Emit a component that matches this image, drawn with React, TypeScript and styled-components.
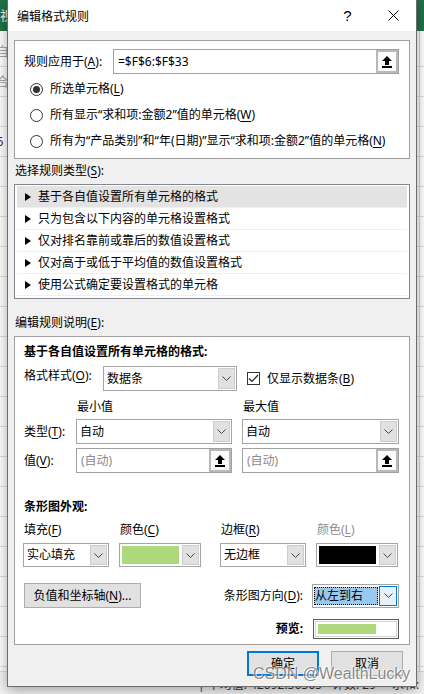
import styled, { createGlobalStyle } from "styled-components";

const GlobalStyle = createGlobalStyle`
  html, body {
    margin: 0;
    padding: 0;
  }
  body {
    font-family: "Noto Sans", "Noto Sans CJK SC", sans-serif;
    font-size: 12px;
    color: #000;
  }
`;

const green = "#add87c";

function Chevron() {
  return (
    <svg width="9" height="5" viewBox="0 0 9 5">
      <polyline points="0.5,0.5 4.5,4.5 8.5,0.5" fill="none" stroke="#444" strokeWidth="1" />
    </svg>
  );
}

function RefIcon() {
  return (
    <svg width="10" height="12" viewBox="0 0 10 12">
      <polygon points="5,0 10,5 7,5 7,9 3,9 3,5 0,5" fill="#000" />
      <rect x="0" y="10" width="10" height="2" fill="#000" />
    </svg>
  );
}

function Triangle() {
  return (
    <svg width="6" height="8" viewBox="0 0 6 8">
      <polygon points="0,0 6,4 0,8" fill="#000" />
    </svg>
  );
}

type SelectProps = {
  width: number
  height?: number
  text?: string
  swatch?: string
}

function Select(props: SelectProps) {
  return (
    <SelectBox $w={props.width} $h={props.height ?? 25}>
      {props.swatch ? <Swatch $color={props.swatch} /> : <SelectText>{props.text}</SelectText>}
      <DropButton>
        <Chevron />
      </DropButton>
    </SelectBox>
  );
}

function RefInput(props: { text: string; muted?: boolean; width?: number }) {
  return (
    <InputBox $w={props.width}>
      <InputText $muted={props.muted}>{props.text}</InputText>
      <RefButton>
        <RefIcon />
      </RefButton>
    </InputBox>
  );
}

const rules = [
  "基于各自值设置所有单元格的格式",
  "只为包含以下内容的单元格设置格式",
  "仅对排名靠前或靠后的数值设置格式",
  "仅对高于或低于平均值的数值设置格式",
  "使用公式确定要设置格式的单元格",
];

export default function App() {
  return (
    <>
      <GlobalStyle />
      <Screen>
        <Excel>
          <Ribbon>视图</Ribbon>
          <Sheet>
            <SheetRow $muted>自</SheetRow>
            <SheetRow $muted>合</SheetRow>
            <SheetRow />
            <SheetRow>6</SheetRow>
            {Array.from({ length: 22 }).map((_, i) => (
              <SheetRow key={i} />
            ))}
          </Sheet>
          <StatusBar>
            <StatusItem $left={198}>| 平均值: 42092.36365</StatusItem>
            <StatusItem $left={332}>计数: 29</StatusItem>
            <StatusItem $left={392}>求和:</StatusItem>
          </StatusBar>
        </Excel>

        <Dialog>
          <TitleBar>
            <Title>编辑格式规则</Title>
            <HelpButton>?</HelpButton>
            <CloseButton>
              <svg width="11" height="11" viewBox="0 0 11 11">
                <line x1="0.5" y1="0.5" x2="10.5" y2="10.5" stroke="#000" strokeWidth="1" />
                <line x1="10.5" y1="0.5" x2="0.5" y2="10.5" stroke="#000" strokeWidth="1" />
              </svg>
            </CloseButton>
          </TitleBar>

          <Body>
            <Panel $pad="8px 10px 4px 9px">
              <ApplyRow>
                <ApplyLabel>规则应用于(<Key>A</Key>):</ApplyLabel>
                <RefInput text="=$F$6:$F$33" />
              </ApplyRow>
              <RadioRow>
                <Radio $checked />
                <span>所选单元格(<Key>L</Key>)</span>
              </RadioRow>
              <RadioRow>
                <Radio />
                <span>所有显示“求和项:金额2”值的单元格(<Key>W</Key>)</span>
              </RadioRow>
              <RadioRow>
                <Radio />
                <span>所有为“产品类别”和“年(日期)”显示“求和项:金额2”值的单元格(<Key>N</Key>)</span>
              </RadioRow>
            </Panel>

            <SectionLabel $top={4}>选择规则类型(<Key>S</Key>):</SectionLabel>
            <RuleList>
              {rules.map((r, i) => (
                <RuleItem key={r} $selected={i === 0}>
                  <Triangle />
                  {r}
                </RuleItem>
              ))}
            </RuleList>

            <SectionLabel $top={16}>编辑规则说明(<Key>E</Key>):</SectionLabel>
            <Panel $pad="7px 10px 5px 9px">
              <Heading>基于各自值设置所有单元格的格式:</Heading>
              <FormatRow>
                <FormatLabel>格式样式(<Key>O</Key>):</FormatLabel>
                <Select width={134} text="数据条" />
                <CheckWrap>
                  <CheckBox>
                    <svg width="11" height="9" viewBox="0 0 11 9">
                      <polyline points="1,4.5 4,7.5 10,1" fill="none" stroke="#222" strokeWidth="1.2" />
                    </svg>
                  </CheckBox>
                  <span>仅显示数据条(<Key>B</Key>)</span>
                </CheckWrap>
              </FormatRow>

              <RangeGrid>
                <span />
                <ColHead>最小值</ColHead>
                <ColHead>最大值</ColHead>
                <RowLabel>类型(<Key>T</Key>):</RowLabel>
                <Select width={156} text="自动" />
                <Select width={157} text="自动" />
                <RowLabel>值(<Key>V</Key>):</RowLabel>
                <RefInput text="(自动)" muted width={156} />
                <RefInput text="(自动)" muted width={157} />
              </RangeGrid>

              <Heading $top={26}>条形图外观:</Heading>
              <LookGrid>
                <LookLabel>填充(<Key>F</Key>)</LookLabel>
                <LookLabel>颜色(<Key>C</Key>)</LookLabel>
                <LookLabel>边框(<Key>R</Key>)</LookLabel>
                <LookLabel $disabled>颜色(<Key>L</Key>)</LookLabel>
                <Select width={86} height={24} text="实心填充" />
                <Select width={82} height={24} swatch={green} />
                <Select width={86} height={24} text="无边框" />
                <Select width={82} height={24} swatch="#000" />
              </LookGrid>

              <ActionRow>
                <PushButton $w={117}>负值和坐标轴(<Key>N</Key>)...</PushButton>
                <Spacer />
                <span>条形图方向(<Key>D</Key>):</span>
                <DirSelect>
                  <DirValue>从左到右</DirValue>
                  <DirDrop>
                    <Chevron />
                  </DirDrop>
                </DirSelect>
              </ActionRow>

              <PreviewRow>
                <Bold>预览:</Bold>
                <PreviewBox>
                  <PreviewInner>
                    <PreviewBar />
                  </PreviewInner>
                </PreviewBox>
              </PreviewRow>
            </Panel>

            <ButtonRow>
              <PushButton $w={72} $h={25} $default>确定</PushButton>
              <PushButton $w={72} $h={25}>取消</PushButton>
            </ButtonRow>
          </Body>
        </Dialog>

        <Watermark>CSDN @WealthLucky</Watermark>
      </Screen>
    </>
  );
}

const Screen = styled.div`
  position: relative;
  width: 424px;
  height: 694px;
  overflow: hidden;
  background: #fff;
`;

const Excel = styled.div`
  display: flex;
  flex-direction: column;
  height: 100%;
`;

const Ribbon = styled.div`
  height: 31px;
  flex: none;
  background: #217346;
  color: #fff;
  font-size: 13px;
  padding-top: 6px;
  box-sizing: border-box;
  line-height: 18px;
`;

const Sheet = styled.div`
  flex: 1;
  overflow: hidden;
  background: #fff;
  background-image: linear-gradient(90deg, transparent 419px, #d4d4d4 419px, #d4d4d4 420px, transparent 420px);
  padding-top: 6px;
`;

const SheetRow = styled.div<{ $muted?: boolean }>`
  height: 29px;
  border-bottom: 1px solid #dedede;
  line-height: 29px;
  font-size: 13px;
  color: ${(p) => (p.$muted ? "#a6a6a6" : "#333")};
  margin-left: -4px;
`;

const StatusBar = styled.div`
  position: relative;
  height: 22px;
  flex: none;
  background: #f3f3f3;
  border-top: 1px solid #dadada;
  color: #333;
`;

const StatusItem = styled.span<{ $left: number }>`
  position: absolute;
  left: ${(p) => p.$left}px;
  top: 3px;
  white-space: nowrap;
`;

const Dialog = styled.div`
  position: absolute;
  left: 7px;
  top: 0;
  width: 410px;
  height: 687px;
  box-sizing: border-box;
  border: 1px solid #6e6e6e;
  border-top: none;
  background: #f0f0f0;
  box-shadow: 0 3px 12px rgba(0, 0, 0, 0.35);
  display: flex;
  flex-direction: column;
`;

const TitleBar = styled.div`
  height: 31px;
  flex: none;
  background: #fff;
  display: flex;
  align-items: center;
  padding-left: 9px;
`;

const Title = styled.div`
  flex: 1;
  font-size: 12px;
`;

const HelpButton = styled.div`
  width: 45px;
  text-align: center;
  font-size: 15px;
  font-family: "Liberation Sans", sans-serif;
`;

const CloseButton = styled.div`
  width: 46px;
  height: 31px;
  display: flex;
  align-items: center;
  justify-content: center;
`;

const Body = styled.div`
  flex: 1;
  display: flex;
  flex-direction: column;
  padding: 9px 6px 10px;
  line-height: 16px;
`;

const Panel = styled.div<{ $pad: string }>`
  background: #fff;
  border: 1px solid #a0a0a0;
  padding: ${(p) => p.$pad};
  display: flex;
  flex-direction: column;
`;

const Key = styled.u`
  text-decoration: underline;
  text-underline-offset: 2px;
`;

const ApplyRow = styled.div`
  display: flex;
  align-items: center;
  margin-bottom: 2px;
`;

const ApplyLabel = styled.div`
  width: 89px;
  flex: none;
`;

const InputBox = styled.div<{ $w?: number }>`
  flex: ${(p) => (p.$w ? "none" : "1")};
  width: ${(p) => (p.$w ? `${p.$w}px` : "auto")};
  height: 25px;
  box-sizing: border-box;
  border: 1px solid #a0a0a0;
  background: #fff;
  display: flex;
  align-items: center;
  padding-left: 4px;
`;

const InputText = styled.span<{ $muted?: boolean }>`
  flex: 1;
  color: ${(p) => (p.$muted ? "#8a8a8a" : "#000")};
`;

const RefButton = styled.div`
  width: 22px;
  align-self: stretch;
  box-sizing: border-box;
  border: 2px solid #b9b9b9;
  background: #fbfbfb;
  display: flex;
  align-items: center;
  justify-content: center;
`;

const RadioRow = styled.div`
  height: 26px;
  display: flex;
  align-items: center;
  gap: 7px;
  padding-left: 6px;
  white-space: nowrap;
`;

const Radio = styled.span<{ $checked?: boolean }>`
  width: 13px;
  height: 13px;
  box-sizing: border-box;
  border: 1px solid #333;
  border-radius: 50%;
  display: flex;
  align-items: center;
  justify-content: center;

  &::after {
    content: "";
    width: 7px;
    height: 7px;
    border-radius: 50%;
    background: ${(p) => (p.$checked ? "#333" : "transparent")};
  }
`;

const SectionLabel = styled.div<{ $top: number }>`
  margin: ${(p) => p.$top}px 0 5px 1px;
`;

const RuleList = styled.div`
  background: #fff;
  border: 1px solid #828790;
  padding: 1px 2px 2px;
`;

const RuleItem = styled.div<{ $selected?: boolean }>`
  height: 21px;
  border-bottom: 1px solid #f0f0f0;
  background: ${(p) => (p.$selected ? "#e3e3e3" : "transparent")};
  display: flex;
  align-items: center;
  gap: 7px;
  padding-left: 8px;
`;

const Heading = styled.div<{ $top?: number }>`
  font-weight: 700;
  margin-top: ${(p) => p.$top ?? 0}px;
`;

const Bold = styled.span`
  font-weight: 700;
`;

const FormatRow = styled.div`
  display: flex;
  align-items: flex-start;
  margin-top: 6px;
`;

const FormatLabel = styled.div`
  width: 79px;
  flex: none;
  padding-top: 2px;
`;

const SelectBox = styled.div<{ $w: number; $h: number }>`
  width: ${(p) => p.$w}px;
  height: ${(p) => p.$h}px;
  box-sizing: border-box;
  border: 1px solid #a5a5a5;
  background: #fff;
  display: flex;
  align-items: stretch;
`;

const SelectText = styled.span`
  flex: 1;
  display: flex;
  align-items: center;
  padding-left: 3px;
  white-space: nowrap;
`;

const Swatch = styled.span<{ $color: string }>`
  flex: 1;
  margin: 2px;
  background: ${(p) => p.$color};
`;

const DropButton = styled.span`
  width: 17px;
  margin: 1px;
  box-sizing: border-box;
  background: #e1e1e1;
  border: 1px solid #cdcdcd;
  display: flex;
  align-items: center;
  justify-content: center;
`;

const CheckWrap = styled.div`
  display: flex;
  align-items: center;
  gap: 7px;
  margin-left: 10px;
  height: 25px;
`;

const CheckBox = styled.span`
  width: 13px;
  height: 13px;
  box-sizing: border-box;
  border: 1px solid #333;
  display: flex;
  align-items: center;
  justify-content: center;
`;

const RangeGrid = styled.div`
  display: grid;
  grid-template-columns: 52px 166px 157px;
  grid-template-rows: 16px 25px 25px;
  row-gap: 4px;
  margin-top: 8px;
  align-items: center;
`;

const ColHead = styled.span`
  padding-left: 1px;
`;

const RowLabel = styled.span`
  white-space: nowrap;
`;

const LookGrid = styled.div`
  display: grid;
  grid-template-columns: 96px 101px 96px 82px;
  grid-template-rows: 16px 24px;
  row-gap: 5px;
  margin: 7px 0 0 -1px;
`;

const LookLabel = styled.span<{ $disabled?: boolean }>`
  padding-left: 1px;
  color: ${(p) => (p.$disabled ? "#8d8d8d" : "#000")};
`;

const ActionRow = styled.div`
  display: flex;
  align-items: center;
  margin-top: 16px;
`;

const Spacer = styled.div`
  flex: 1;
`;

const PushButton = styled.div<{ $w: number; $h?: number; $default?: boolean }>`
  width: ${(p) => p.$w}px;
  height: ${(p) => p.$h ?? 25}px;
  box-sizing: border-box;
  background: #e1e1e1;
  border: ${(p) => (p.$default ? "2px solid #0078d7" : "1px solid #adadad")};
  display: flex;
  align-items: center;
  justify-content: center;
  white-space: nowrap;
`;

const DirSelect = styled.div`
  width: 87px;
  height: 24px;
  margin-left: 9px;
  box-sizing: border-box;
  border: 1px solid #a5a5a5;
  background: #fff;
  display: flex;
  padding: 1px;
  gap: 1px;
`;

const DirValue = styled.span`
  flex: 1;
  background: #99c9ef;
  outline: 1px dotted #000;
  outline-offset: -1px;
  display: flex;
  align-items: center;
  padding-left: 1px;
  margin: 1px 0;
`;

const DirDrop = styled.span`
  width: 18px;
  box-sizing: border-box;
  border: 1px solid #0078d7;
  background: #e5f1fb;
  display: flex;
  align-items: center;
  justify-content: center;
`;

const PreviewRow = styled.div`
  display: flex;
  justify-content: flex-end;
  align-items: center;
  gap: 10px;
  margin-top: 11px;
`;

const PreviewBox = styled.div`
  width: 86px;
  height: 20px;
  box-sizing: border-box;
  border: 1px solid #5a5a5a;
  padding: 1px;
`;

const PreviewInner = styled.div`
  height: 100%;
  box-sizing: border-box;
  border: 1px solid #d4d4d4;
  padding: 2px;
`;

const PreviewBar = styled.div`
  width: 58px;
  height: 100%;
  background: ${green};
`;

const ButtonRow = styled.div`
  display: flex;
  justify-content: flex-end;
  gap: 12px;
  margin-top: 6px;
  padding-right: 7px;
`;

const Watermark = styled.div`
  position: absolute;
  left: 253px;
  top: 665px;
  font-family: "Liberation Sans", Arial, sans-serif;
  font-size: 16px;
  color: rgba(110, 110, 110, 0.8);
  text-shadow: 1px 1px 0 rgba(255, 255, 255, 0.9), -1px -1px 0 rgba(255, 255, 255, 0.6);
  white-space: nowrap;
`;
